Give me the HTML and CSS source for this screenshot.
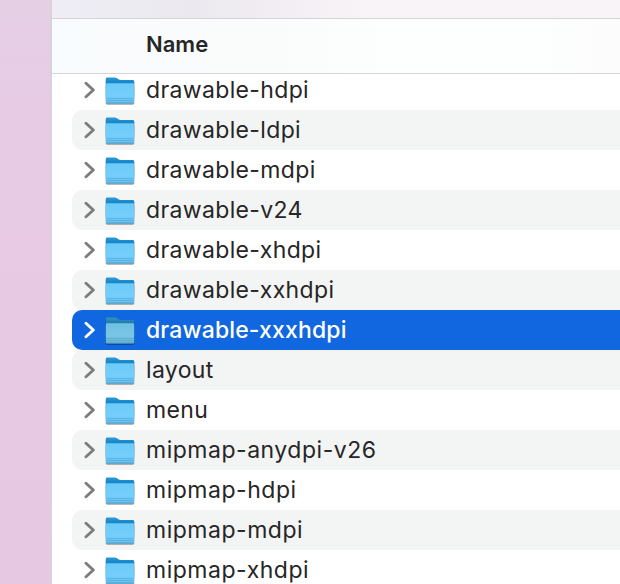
FILE: index.html
```
<!DOCTYPE html>
<html lang="en">
<head>
<meta charset="utf-8">
<title>Files</title>
<link rel="stylesheet" href="styles.css">
</head>
<body>
<svg class="defs" width="0" height="0" aria-hidden="true">
  <defs>
    <linearGradient id="back" x1="0" y1="0" x2="0" y2="1"><stop offset="0" stop-color="#2f9bd3"/><stop offset=".25" stop-color="#1786c8"/></linearGradient>
    <linearGradient id="front" x1="0" y1="0" x2="0" y2="1"><stop offset="0" stop-color="#6acbf8"/><stop offset=".6" stop-color="#76cefb"/><stop offset="1" stop-color="#62bff0"/></linearGradient>
  </defs>
  <symbol id="chevron" viewBox="0 0 12 18"><path d="M2 2.3 9.3 9 2 15.7" fill="none" stroke="currentColor" stroke-width="2.9" stroke-linecap="round" stroke-linejoin="round"/></symbol>
  <symbol id="folder" viewBox="0 0 30 28">
    <path d="M.8 1.8Q.8 .4 2.2 .4H9.8Q11 .4 12 1.2L13.5 2.3Q14.4 2.9 15.5 2.9H27.8Q29.2 2.9 29.2 4.3V20H.8Z" fill="url(#back)"/>
    <path d="M.8 7.9Q.8 6.3 2.2 6.3H27.8Q29.2 6.3 29.2 7.9V25.2Q29.2 26.6 27.8 26.6H2.2Q.8 26.6 .8 25.2Z" fill="url(#front)"/>
    <path d="M1 21.5H29M1 23.5H29" stroke="#4ca7d5" stroke-width=".6"/>
    <path d="M1.6 26H28.4" stroke="#4a9fc9" stroke-width=".8"/>
  </symbol>
</svg>
<main class="window">
  <div class="toolbar"></div>
  <header class="columns">Name</header>
  <ul class="files">
    <li class="row"><svg class="chevron"><use href="#chevron"/></svg><svg class="folder"><use href="#folder"/></svg><span>drawable-hdpi</span></li>
    <li class="row"><svg class="chevron"><use href="#chevron"/></svg><svg class="folder"><use href="#folder"/></svg><span>drawable-ldpi</span></li>
    <li class="row"><svg class="chevron"><use href="#chevron"/></svg><svg class="folder"><use href="#folder"/></svg><span>drawable-mdpi</span></li>
    <li class="row"><svg class="chevron"><use href="#chevron"/></svg><svg class="folder"><use href="#folder"/></svg><span>drawable-v24</span></li>
    <li class="row"><svg class="chevron"><use href="#chevron"/></svg><svg class="folder"><use href="#folder"/></svg><span>drawable-xhdpi</span></li>
    <li class="row"><svg class="chevron"><use href="#chevron"/></svg><svg class="folder"><use href="#folder"/></svg><span>drawable-xxhdpi</span></li>
    <li class="row selected"><svg class="chevron"><use href="#chevron"/></svg><svg class="folder"><use href="#folder"/></svg><span>drawable-xxxhdpi</span></li>
    <li class="row"><svg class="chevron"><use href="#chevron"/></svg><svg class="folder"><use href="#folder"/></svg><span>layout</span></li>
    <li class="row"><svg class="chevron"><use href="#chevron"/></svg><svg class="folder"><use href="#folder"/></svg><span>menu</span></li>
    <li class="row mipmap"><svg class="chevron"><use href="#chevron"/></svg><svg class="folder"><use href="#folder"/></svg><span>mipmap-anydpi-v26</span></li>
    <li class="row mipmap"><svg class="chevron"><use href="#chevron"/></svg><svg class="folder"><use href="#folder"/></svg><span>mipmap-hdpi</span></li>
    <li class="row mipmap"><svg class="chevron"><use href="#chevron"/></svg><svg class="folder"><use href="#folder"/></svg><span>mipmap-mdpi</span></li>
    <li class="row mipmap"><svg class="chevron"><use href="#chevron"/></svg><svg class="folder"><use href="#folder"/></svg><span>mipmap-xhdpi</span></li>
  </ul>
</main>
</body>
</html>
```
FILE: styles.css
```
* { box-sizing: border-box; }

body {
  margin: 0;
  height: 584px;
  overflow: hidden;
  padding-left: 50px;
  background: linear-gradient(#e5d0e6, #e7cae4 20%, #e7c8e3);
  font-family: Inter, "Liberation Sans", sans-serif;
  color: #262626;
}

.defs { display: block; }

.window {
  height: 584px;
  overflow: hidden;
  border-left: 2px solid #d9d3d9;
  background: #fff;
}

.toolbar {
  height: 18px;
  background: linear-gradient(90deg, #efedf5, #ebe9ef 25%, #f3eef3 42%, #f9f4f8 55%, #f9f4f8);
}

.columns {
  height: 56px;
  padding-left: 94px;
  border-top: 1px solid #d5d4d6;
  border-bottom: 1px solid #d5d6d7;
  background: linear-gradient(90deg, #f8fbfd, #fafbfb 35%, #fdfefe 60%, #fdfefe 85%, #fcfcfd);
  font-size: 22px;
  font-weight: 600;
  line-height: 50px;
}

.files {
  margin: -4px 0 0;
  padding: 0 0 0 20px;
  list-style: none;
}

.row {
  display: flex;
  align-items: center;
  height: 40px;
  padding-left: 12px;
  border-radius: 10px 0 0 10px;
  font-size: 23px;
  line-height: 40px;
  letter-spacing: .36px;
  white-space: nowrap;
}

.row:nth-child(even) { background: #f3f4f4; }

.row.mipmap { letter-spacing: .52px; }

.row.selected {
  background: #1167df;
  color: #fff;
  font-weight: 500;
  letter-spacing: .14px;
}

.chevron {
  width: 12px;
  height: 18px;
  margin: 0 9px 1px 0;
  color: #7c7c7c;
}

.selected .chevron { color: #fff; }

.folder {
  width: 30px;
  height: 28px;
  margin: 2px 11px 0 0;
  overflow: visible;
  filter: drop-shadow(0 1px .7px rgba(0, 0, 0, .4));
}

.selected .folder { filter: saturate(.85) brightness(.96) hue-rotate(-3deg) drop-shadow(0 1px .7px rgba(0, 0, 0, .4)); }
```
